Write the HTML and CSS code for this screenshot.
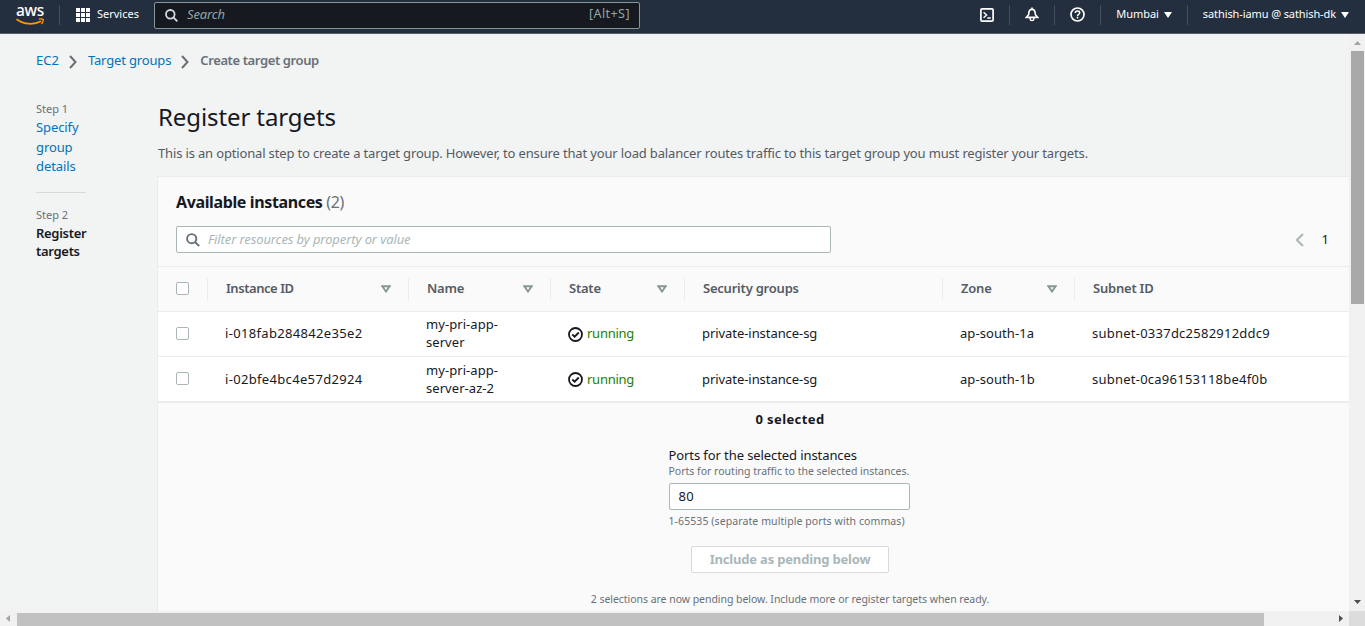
FILE: index.html
```html
<!DOCTYPE html>
<html lang="en">
<head>
<meta charset="utf-8">
<title>Register targets</title>
<link rel="stylesheet" href="styles.css">
</head>
<body>
<header class="topnav">
  <div class="logo">
    <span class="logo-text">aws</span>
    <svg width="29" height="7" viewBox="0 0 29 7" fill="none" stroke="#f90"><path d="M0.500 1.200C8 6.800 18 7 25 3.200" stroke-width="1.800"/><path d="M22.800 1.100Q26.200 0.600 27.200 1.400Q27.500 3.500 25.600 6" stroke-width="1.300"/></svg>
  </div>
  <span class="sep sep-logo"></span>
  <svg class="grid-icon" width="14" height="14" viewBox="0 0 14 14" fill="#fff">
    <path d="M0 0h4v4H0zM5 0h4v4H5zM10 0h4v4h-4zM0 5h4v4H0zM5 5h4v4H5zM10 5h4v4h-4zM0 10h4v4H0zM5 10h4v4H5zM10 10h4v4h-4z"/>
  </svg>
  <span class="services">Services</span>
  <div class="search">
    <svg width="13" height="13" viewBox="0 0 13 13" fill="none" stroke="#d5dbdb" stroke-width="1.8"><circle cx="5.3" cy="5.3" r="4.3"/><path d="M8.4 8.4l3.9 3.9"/></svg>
    <span class="search-text">Search</span>
    <span class="shortcut">[Alt+S]</span>
  </div>
  <div class="nav-right">
    <svg class="shell" width="14" height="14" viewBox="0 0 14 14" fill="none" stroke="#fff" stroke-width="1.7"><rect x="0.9" y="0.9" width="12.2" height="12.2" rx="1.2"/><path d="M3.6 4.2L6.6 7L3.6 9.8M7.3 10h3.4" stroke-width="1.4"/></svg>
    <span class="sep"></span>
    <svg width="14" height="15" viewBox="0 0 14 15" fill="none" stroke="#fff" stroke-width="1.6"><path d="M7 0.500v2M3.700 7.500C3.700 4 4.800 2.400 7 2.400s3.300 1.600 3.300 5.100L12.700 10.400H1.300z"/><path d="M5.200 11v1.200q0 1.300 1.800 1.300t1.800-1.300V11" stroke-width="1.400"/></svg>
    <span class="sep"></span>
    <svg width="15" height="15" viewBox="0 0 15 15" fill="none" stroke="#fff" stroke-width="1.700"><circle cx="7.500" cy="7.500" r="6.500"/><path d="M5.300 6q0-2 2.200-2t2.200 1.700q0 1-1.100 1.600T7.500 9.200M7.500 10v1.500" stroke-width="1.500"/></svg>
    <span class="sep"></span>
    <span class="menu region">Mumbai</span>
    <svg width="8" height="6" viewBox="0 0 8 6"><path d="M0 0h8L4 6z" fill="#fff"/></svg>
    <span class="sep"></span>
    <span class="menu account">sathish-iamu @ sathish-dk</span>
    <svg width="8" height="6" viewBox="0 0 8 6"><path d="M0 0h8L4 6z" fill="#fff"/></svg>
  </div>
</header>
<div class="viewport">
  <div class="page">
    <nav class="crumbs">
      <a class="ec2">EC2</a>
      <svg width="8" height="14" viewBox="0 0 8 14" fill="none" stroke="#687078" stroke-width="2"><path d="M1 1l5.500 6L1 13"/></svg>
      <a class="tg">Target groups</a>
      <svg width="8" height="14" viewBox="0 0 8 14" fill="none" stroke="#687078" stroke-width="2"><path d="M1 1l5.500 6L1 13"/></svg>
      <b>Create target group</b>
    </nav>
    <div class="columns">
      <aside class="steps">
        <div class="step-label">Step 1</div>
        <a class="step-link">Specify<br>group<br>details</a>
        <div class="step-label second">Step 2</div>
        <b class="step-current">Register<br>targets</b>
      </aside>
      <main class="main">
        <h1>Register targets</h1>
        <p class="desc">This is an optional step to create a target group. However, to ensure that your load balancer routes traffic to this target group you must register your targets.</p>
        <section class="panel">
          <div class="panel-head">
            <h2>Available instances <span class="count">(2)</span></h2>
            <div class="tools">
              <div class="filter">
                <svg width="14" height="14" viewBox="0 0 14 14" fill="none" stroke="#687078" stroke-width="1.900"><circle cx="5.700" cy="5.700" r="4.600"/><path d="M9 9l4.200 4.200"/></svg>
                <span>Filter resources by property or value</span>
              </div>
              <div class="pager">
                <svg width="9" height="14" viewBox="0 0 9 14" fill="none" stroke="#aab7b8" stroke-width="2"><path d="M8 1L1.800 7L8 13"/></svg>
                <span>1</span>
              </div>
            </div>
          </div>
          <div class="row head">
            <div class="cell check"><i class="box"></i></div>
            <div class="cell"><span class="th-id">Instance ID</span><svg class="sort" width="10" height="8" viewBox="0 0 10 8"><path d="M1.300 1.200h7.400L5 6.500z"/></svg></div>
            <div class="cell"><span>Name</span><svg class="sort" width="10" height="8" viewBox="0 0 10 8"><path d="M1.300 1.200h7.400L5 6.500z"/></svg></div>
            <div class="cell"><span>State</span><svg class="sort" width="10" height="8" viewBox="0 0 10 8"><path d="M1.300 1.200h7.400L5 6.500z"/></svg></div>
            <div class="cell"><span>Security groups</span></div>
            <div class="cell"><span>Zone</span><svg class="sort" width="10" height="8" viewBox="0 0 10 8"><path d="M1.300 1.200h7.400L5 6.500z"/></svg></div>
            <div class="cell last"><span>Subnet ID</span></div>
          </div>
          <div class="row first">
            <div class="cell check"><i class="box"></i></div>
            <div class="cell id">i-018fab284842e35e2</div>
            <div class="cell name">my-pri-app-<br>server</div>
            <div class="cell state"><svg width="15" height="15" viewBox="0 0 15 15" fill="none" stroke="#16191f" stroke-width="1.800"><circle cx="7.500" cy="7.500" r="6.500"/><path d="M4.300 7.500l2.300 2.200L10.800 5.500"/></svg><span>running</span></div>
            <div class="cell sg">private-instance-sg</div>
            <div class="cell zone">ap-south-1a</div>
            <div class="cell subnet">subnet-0337dc2582912ddc9</div>
          </div>
          <div class="row final">
            <div class="cell check"><i class="box"></i></div>
            <div class="cell id">i-02bfe4bc4e57d2924</div>
            <div class="cell name">my-pri-app-<br>server-az-2</div>
            <div class="cell state"><svg width="15" height="15" viewBox="0 0 15 15" fill="none" stroke="#16191f" stroke-width="1.800"><circle cx="7.500" cy="7.500" r="6.500"/><path d="M4.300 7.500l2.300 2.200L10.800 5.500"/></svg><span>running</span></div>
            <div class="cell sg">private-instance-sg</div>
            <div class="cell zone">ap-south-1b</div>
            <div class="cell subnet">subnet-0ca96153118be4f0b</div>
          </div>
          <div class="ports">
            <b class="selected">0 selected</b>
            <div class="field">
              <div class="field-label">Ports for the selected instances</div>
              <div class="hint">Ports for routing traffic to the selected instances.</div>
              <div class="input">80</div>
              <div class="hint below">1-65535 (separate multiple ports with commas)</div>
            </div>
            <div class="button">Include as pending below</div>
            <div class="pending">2 selections are now pending below. Include more or register targets when ready.</div>
          </div>
        </section>
      </main>
    </div>
  </div>
  <div class="vbar">
    <svg width="7" height="4" viewBox="0 0 7 4"><path d="M0 4L3.500 0L7 4z" fill="#a3a3a3"/></svg>
    <i class="vthumb"></i>
    <svg class="down" width="7" height="4" viewBox="0 0 7 4"><path d="M0 0h7L3.500 4z" fill="#505050"/></svg>
  </div>
  <div class="hbar">
    <svg width="4" height="7" viewBox="0 0 4 7"><path d="M4 0v7L0 3.500z" fill="#a3a3a3"/></svg>
    <i class="hthumb"></i>
    <svg class="right" width="4" height="7" viewBox="0 0 4 7"><path d="M0 0v7L4 3.500z" fill="#505050"/></svg>
  </div>
  <div class="corner"></div>
</div>
</body>
</html>
```
FILE: styles.css
```css
* { box-sizing: border-box; }
body { margin: 0; width: 1365px; height: 626px; overflow: hidden; font-family: "Noto Sans", "Open Sans", sans-serif; font-size: 13px; line-height: 18px; color: #16191f; background: #f2f3f3; white-space: nowrap; }
svg { display: block; flex: none; }
h1, h2, p { margin: 0; }
a { color: #0073bb; }

.topnav { display: flex; align-items: center; height: 34px; padding-bottom: 4px; background: #232f3e; border-bottom: 1px solid #545b64; color: #fff; font-size: 11px; }
.logo { width: 30px; height: 22px; margin-left: 16px; }
.logo-text { display: block; height: 14px; font-size: 15.500px; line-height: 13px; font-weight: 500; letter-spacing: -0.300px; }
.sep { width: 1px; height: 20px; background: #414d5c; flex: none; }
.sep-logo { margin-left: 13px; margin-right: 16px; }
.services { margin: -1px 0 0 7px; width: 57px; }
.search { display: flex; align-items: center; width: 486px; height: 27px; margin-top: 1px; padding: 0 9px 0 10px; background: #16191f; border: 1px solid #879596; border-radius: 2px; color: #95a5a6; font-size: 13px; }
.search-text { margin: -2px 0 0 9px; font-style: italic; letter-spacing: -0.150px; }
.shortcut { margin: -2px 0 0 auto; font-size: 12.500px; letter-spacing: 0.450px; }
.nav-right { display: flex; align-items: center; margin-left: auto; padding-right: 16px; }
.nav-right > .sep { margin: 0 15px; }
.menu { margin: -1px 5px 0 0; }
.region { letter-spacing: -0.050px; }
.account { letter-spacing: -0.100px; }

.viewport { display: grid; grid-template: 577px 15px / 1349px 16px; height: 592px; }
.page { overflow: hidden; background: #f2f3f3; }
.crumbs { display: flex; align-items: center; height: 18px; margin: 17px 0 0 36px; }
.crumbs svg { margin: 3px 11px 0 10px; }
.tg { letter-spacing: -0.150px; }
.crumbs b { color: #687078; font-weight: 600; letter-spacing: -0.390px; }
.columns { display: grid; grid-template-columns: 121px 1192px; margin: 33px 0 0 36px; }
.steps { width: 50px; }
.step-label { font-size: 11px; line-height: 14px; color: #687078; }
.step-link { display: block; margin-top: 2px; line-height: 19.500px; letter-spacing: -0.100px; }
.step-label.second { margin-top: 15px; padding-top: 15px; border-top: 1px solid #d5dbdb; }
.step-current { display: block; margin-top: 2px; font-weight: 600; letter-spacing: -0.300px; }
h1 { font-size: 24px; font-weight: 400; line-height: 30px; margin-left: 1px; letter-spacing: -0.100px; }
.desc { margin: 12px 0 0 1px; color: #545b64; letter-spacing: -0.156px; }
.panel { margin-top: 14px; border: 1px solid #eaeded; border-right: 0; background: #fafafa; }
.panel-head { height: 90px; padding: 14px 18px 0; border-bottom: 1px solid #eaeded; }
h2 { font-size: 16px; line-height: 22px; font-weight: 700; letter-spacing: -0.370px; }
.count { font-weight: 400; color: #687078; }
.tools { display: flex; justify-content: space-between; margin-top: 13px; }
.filter { display: flex; align-items: center; width: 655px; height: 27px; padding-left: 9px; border: 1px solid #aab7b8; border-radius: 2px; background: #fff; color: #aab7b8; font-style: italic; gap: 8px; letter-spacing: -0.110px; }
.filter span, .pager span { margin-top: -2px; }
.pager { display: flex; align-items: center; gap: 18px; margin-right: 2px; }
.row { display: grid; grid-template-columns: 50px 201px 142px 134px 258px 132px 274px; height: 45px; align-items: center; background: #fff; border-bottom: 1px solid #eaeded; }
.cell { padding-left: 17px; }
.head { background: #fafafa; color: #545b64; font-weight: 600; letter-spacing: -0.220px; }
.head .cell { display: flex; align-items: center; justify-content: space-between; height: 22px; padding: 0 17px 0 18px; border-right: 1px solid #eaeded; }
.head .cell span { margin-top: -2px; }
.head .last { border-right: 0; }
.head .th-id { letter-spacing: -0.450px; }
.sort path { fill: none; stroke: #879596; stroke-width: 1.900; }
.box { display: block; width: 13px; height: 13px; border: 1px solid #aab7b8; border-radius: 2px; background: #fff; position: relative; top: -1px; }
.row .check { padding-left: 18px; }
.first { padding-bottom: 2px; }
.first .box, .first .state svg { margin-top: 2px; }
.final { height: 46px; border-bottom: 2px solid #eaeded; }
.id { letter-spacing: 0.330px; }
.name { letter-spacing: 0.060px; }
.zone { letter-spacing: 0.070px; }
.subnet { letter-spacing: 0.240px; }
.sg { letter-spacing: -0.060px; }
.state { display: flex; align-items: center; gap: 4px; color: #1d8102; letter-spacing: -0.250px; }
.ports { display: flex; flex-direction: column; align-items: center; width: 1264px; height: 240px; padding-top: 7px; }
.selected { font-weight: 700; letter-spacing: 0.400px; }
.field { width: 241px; margin-top: 18px; margin-right: 2px; }
.field-label { letter-spacing: -0.090px; }
.hint { height: 14px; font-size: 10.500px; line-height: 14px; color: #687078; }
.input { height: 27px; margin-top: 5px; padding: 3px 9px; border: 1px solid #aab7b8; border-radius: 2px; background: #fff; letter-spacing: 0.300px; }
.below { margin-top: 4px; letter-spacing: 0.090px; }
.button { width: 198px; height: 27px; margin-top: 18px; border: 1px solid #d5dbdb; border-radius: 2px; background: #fff; color: #aab7b8; font-weight: 700; line-height: 25px; letter-spacing: -0.180px; text-align: center; }
.pending { margin-top: 19px; font-size: 10.500px; line-height: 14px; letter-spacing: -0.040px; color: #687078; }

.vbar { display: flex; flex-direction: column; align-items: center; padding-top: 7px; background: #f1f1f1; }
.vthumb { width: 13px; height: 253px; margin-top: 6px; background: #a8a8a8; }
.down { margin-top: auto; margin-bottom: 7px; }
.hbar { display: flex; align-items: center; padding-left: 6px; background: #f1f1f1; }
.hthumb { width: 1247px; height: 13px; margin: 2px 0 0 7px; background: #c1c1c1; }
.right { margin-left: auto; margin-right: 6px; }
.corner { background: #dcdcdc; }
```
